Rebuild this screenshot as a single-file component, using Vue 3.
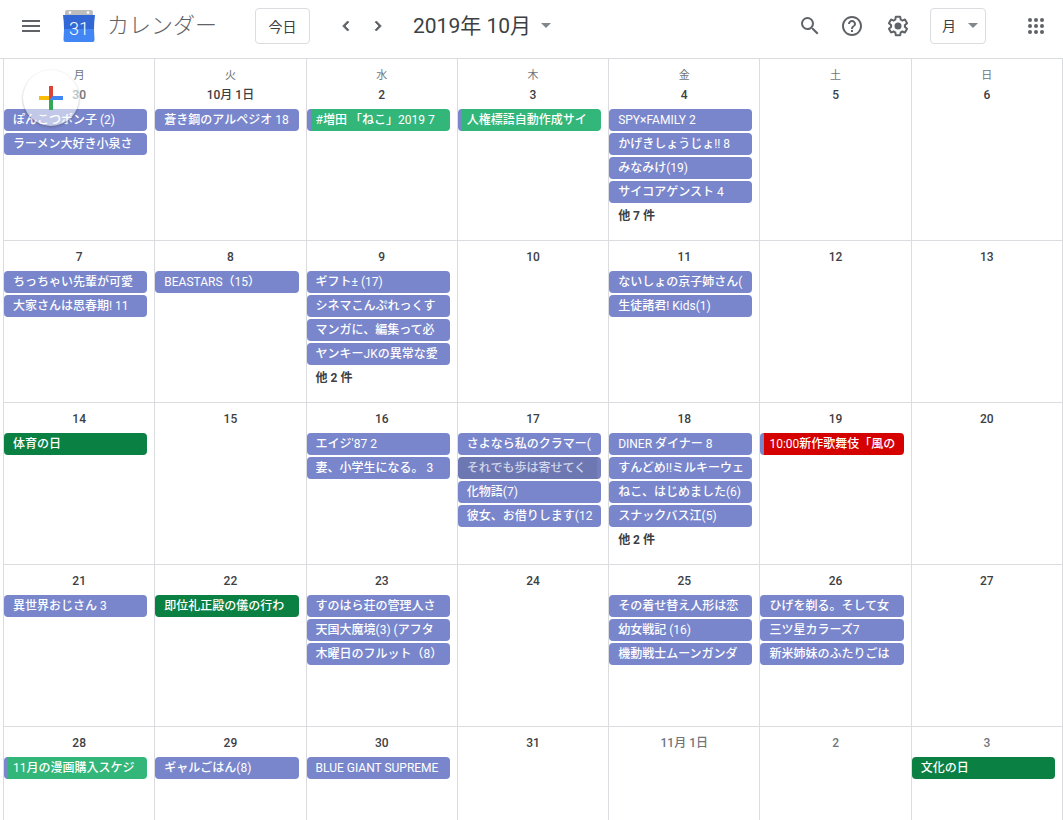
<script setup>
import { ref } from 'vue'

const view = ref('month')
const weekdays = ['月', '火', '水', '木', '金', '土', '日']

// Splits a title into Latin and Japanese runs so each script gets its own weight.
const runs = (title) =>
  (title.match(/[\u3000-\u9fff\uff00-\uffef]+|[^\u3000-\u9fff\uff00-\uffef]+/g) || []).map((text) => ({
    text,
    ja: /[\u3000-\u9fff\uff00-\uffef]/.test(text),
  }))

const e = (title, kind = 'book') => ({ title, kind, runs: runs(title) })
const d = (label, events = [], more = '', outside = false) => ({ label, events, more, outside })

const weeks = [
  [
    d('30', [e('ぽんこつポン子 (2)'), e('ラーメン大好き小泉さ')], '', true),
    d('10月 1日', [e('蒼き鋼のアルペジオ 18')]),
    d('2', [e('#増田 「ねこ」2019 7', 'task')]),
    d('3', [e('人権標語自動作成サイ', 'task')]),
    d('4', [e('SPY×FAMILY 2'), e('かげきしょうじょ!! 8'), e('みなみけ(19)'), e('サイコアゲンスト 4')], '他 7 件'),
    d('5'),
    d('6'),
  ],
  [
    d('7', [e('ちっちゃい先輩が可愛'), e('大家さんは思春期! 11')]),
    d('8', [e('BEASTARS（15）')]),
    d('9', [e('ギフト± (17)'), e('シネマこんぷれっくす'), e('マンガに、編集って必'), e('ヤンキーJKの異常な愛')], '他 2 件'),
    d('10'),
    d('11', [e('ないしょの京子姉さん('), e('生徒諸君! Kids(1)')]),
    d('12'),
    d('13'),
  ],
  [
    d('14', [e('体育の日', 'holiday')]),
    d('15'),
    d('16', [e("エイジ'87 2"), e('妻、小学生になる。 3')]),
    d('17', [e('さよなら私のクラマー('), e('それでも歩は寄せてく', 'faded'), e('化物語(7)'), e('彼女、お借りします(12')]),
    d('18', [e('DINER ダイナー 8'), e('すんどめ!!ミルキーウェ'), e('ねこ、はじめました(6)'), e('スナックバス江(5)')], '他 2 件'),
    d('19', [e('10:00新作歌舞伎「風の', 'stage')]),
    d('20'),
  ],
  [
    d('21', [e('異世界おじさん 3')]),
    d('22', [e('即位礼正殿の儀の行わ', 'holiday')]),
    d('23', [e('すのはら荘の管理人さ'), e('天国大魔境(3) (アフタ'), e('木曜日のフルット（8）')]),
    d('24'),
    d('25', [e('その着せ替え人形は恋'), e('幼女戦記 (16)'), e('機動戦士ムーンガンダ')]),
    d('26', [e('ひげを剃る。そして女'), e('三ツ星カラーズ7'), e('新米姉妹のふたりごは')]),
    d('27'),
  ],
  [
    d('28', [e('11月の漫画購入スケジ', 'task')]),
    d('29', [e('ギャルごはん(8)')]),
    d('30', [e('BLUE GIANT SUPREME')]),
    d('31'),
    d('11月 1日', [], '', true),
    d('2', [], '', true),
    d('3', [e('文化の日', 'holiday')], '', true),
  ],
]
</script>

<template>
  <div class="app">
    <header class="bar">
      <button class="icon menu" aria-label="メインメニュー">
        <svg width="24" height="24" viewBox="0 0 24 24"><path d="M3 18h18v-2H3v2zm0-5h18v-2H3v2zm0-7v2h18V6H3z" /></svg>
      </button>
      <svg class="logo" width="32" height="32" viewBox="0 0 32 32" aria-hidden="true">
        <path fill="#bdbdbd" d="M4 0h24q2 0 2 2v4H2V2q0-2 2-2z" />
        <circle cx="7" cy="2.500" r="1.300" fill="#fff" />
        <circle cx="25" cy="2.500" r="1.300" fill="#fff" />
        <path fill="#3367d6" d="M0 5h32q-1 7-1 14H1Q1 12 0 5z" />
        <path fill="#4285f4" d="M1 19h30l.5 11q0 2-2 2h-27q-2 0-2-2z" />
        <text x="16" y="25" text-anchor="middle" class="logo-num">31</text>
      </svg>
      <h1 class="name">カレンダー</h1>
      <button class="outlined today">今日</button>
      <button class="icon prev" aria-label="前の月">
        <svg width="20" height="20" viewBox="0 0 24 24"><path d="M15.410 7.410L14 6l-6 6 6 6 1.410-1.410L10.830 12z" class="heavy" /></svg>
      </button>
      <button class="icon next" aria-label="次の月">
        <svg width="20" height="20" viewBox="0 0 24 24"><path d="M10 6L8.590 7.410 13.170 12l-4.580 4.590L10 18l6-6z" class="heavy" /></svg>
      </button>
      <button class="period">
        <span>2019年 10月</span>
        <svg width="10" height="5" viewBox="0 0 10 5"><path d="M0 0h10L5 5z" /></svg>
      </button>
      <div class="tools">
        <button class="icon" aria-label="検索">
          <svg width="24" height="24" viewBox="0 0 24 24"><path d="M15.500 14h-.790l-.280-.270A6.471 6.471 0 0 0 16 9.500 6.500 6.500 0 1 0 9.500 16c1.610 0 3.090-.590 4.230-1.570l.270.280v.790l5 4.990L20.490 19l-4.990-5zm-6 0C7.010 14 5 11.990 5 9.500S7.010 5 9.500 5 14 7.010 14 9.500 11.990 14 9.500 14z" /></svg>
        </button>
        <button class="icon" aria-label="ヘルプ">
          <svg width="24" height="24" viewBox="0 0 24 24"><path d="M11 18h2v-2h-2v2zm1-16C6.480 2 2 6.480 2 12s4.480 10 10 10 10-4.480 10-10S17.520 2 12 2zm0 18c-4.410 0-8-3.590-8-8s3.590-8 8-8 8 3.590 8 8-3.590 8-8 8zm0-14c-2.210 0-4 1.790-4 4h2c0-1.100.9-2 2-2s2 .9 2 2c0 2-3 1.750-3 5h2c0-2.250 3-2.500 3-5 0-2.210-1.790-4-4-4z" /></svg>
        </button>
        <button class="icon" aria-label="設定">
          <svg width="24" height="24" viewBox="0 0 24 24">
            <path d="M13.850 22.250h-3.700c-.740 0-1.360-.540-1.450-1.270l-.270-1.890c-.270-.140-.530-.290-.790-.460l-1.800.720c-.700.260-1.470-.030-1.810-.650L2.200 15.530c-.350-.660-.200-1.440.360-1.880l1.530-1.190c-.010-.150-.020-.300-.020-.460 0-.150.010-.310.020-.460l-1.520-1.190c-.590-.450-.740-1.260-.370-1.880l1.850-3.190c.340-.620 1.110-.900 1.790-.630l1.810.730c.260-.170.520-.320.780-.460l.270-1.910c.090-.700.710-1.250 1.440-1.250h3.700c.740 0 1.360.540 1.450 1.270l.270 1.890c.270.140.530.290.790.460l1.800-.720c.710-.260 1.480.030 1.820.650l1.840 3.180c.360.660.200 1.440-.360 1.880l-1.520 1.190c.010.150.020.300.020.460s-.010.310-.020.460l1.520 1.190c.560.450.720 1.230.370 1.860l-1.860 3.220c-.340.620-1.110.900-1.800.630l-1.800-.720c-.260.170-.520.320-.780.460l-.270 1.910c-.100.680-.720 1.220-1.460 1.220zm-3.230-2h2.760l.370-2.550.530-.220c.440-.180.880-.440 1.340-.780l.450-.340 2.380.960 1.380-2.400-2.030-1.580.070-.560c.030-.260.060-.510.060-.780s-.030-.530-.060-.780l-.070-.560 2.030-1.580-1.390-2.400-2.390.960-.450-.350c-.420-.320-.870-.580-1.330-.770l-.520-.220-.370-2.550h-2.760l-.370 2.550-.530.210c-.440.190-.880.440-1.340.790l-.450.330-2.380-.950-1.390 2.390 2.030 1.580-.070.560a7 7 0 0 0-.060.790c0 .260.020.530.060.780l.070.560-2.030 1.580 1.380 2.400 2.390-.960.450.350c.430.330.860.580 1.330.770l.530.220.380 2.550z" />
            <circle cx="12" cy="12" r="3.500" />
          </svg>
        </button>
        <div class="view">
          <select v-model="view" class="outlined view-select" aria-label="表示">
            <option value="month">月</option>
            <option value="week">週</option>
            <option value="day">日</option>
          </select>
          <svg class="view-arrow" width="10" height="5" viewBox="0 0 10 5"><path d="M0 0h10L5 5z" /></svg>
        </div>
        <button class="icon apps" aria-label="アプリ">
          <svg width="24" height="24" viewBox="0 0 24 24">
            <template v-for="y in [6, 12, 18]" :key="y">
              <circle v-for="x in [6, 12, 18]" :key="x" :cx="x" :cy="y" r="2" />
            </template>
          </svg>
        </button>
      </div>
    </header>

    <main class="calendar">
      <button class="create" aria-label="作成">
        <svg width="24" height="24" viewBox="0 0 24 24">
          <path fill="#fbbc05" d="M0 10h12v4H0z" />
          <path fill="#4285f4" d="M12 10h12v4H10z" />
          <path fill="#db4437" d="M10 0h4v10l-4 4z" />
          <path fill="#34a853" d="M10 14h4v10h-4z" />
        </svg>
      </button>
      <div class="month">
        <div v-for="(week, w) in weeks" :key="w" class="week">
          <section v-for="(day, i) in week" :key="i" class="day">
            <div v-if="w === 0" class="weekday">{{ weekdays[i] }}</div>
            <h2 class="date" :class="{ outside: day.outside, first: w === 0 }">{{ day.label }}</h2>
            <button v-for="ev in day.events" :key="ev.title" class="event" :class="ev.kind">
              <span class="title"><span v-for="(run, r) in ev.runs" :key="r" :class="{ ja: run.ja }">{{ run.text }}</span></span>
            </button>
            <button v-if="day.more" class="more">{{ day.more }}</button>
          </section>
        </div>
      </div>
    </main>
  </div>
</template>

<style>
body {
  margin: 0;
  background: #fff;
}
</style>

<style scoped>
.app {
  display: flex;
  flex-direction: column;
  height: 100vh;
  overflow: hidden;
  color: #3c4043;
  font-family: Roboto, "Noto Sans CJK JP", sans-serif;
}
button,
select {
  margin: 0;
  padding: 0;
  border: 0;
  background: none;
  color: inherit;
  font: inherit;
  cursor: pointer;
}
svg {
  display: block;
  flex: none;
  fill: #5f6368;
}
.bar {
  display: flex;
  align-items: center;
  flex: none;
  box-sizing: border-box;
  height: 59px;
  padding: 0 15px 7px 19px;
  border-bottom: 1px solid #dadce0;
}
.icon {
  display: flex;
  align-items: center;
  justify-content: center;
  flex: none;
  width: 24px;
  height: 24px;
}
.heavy {
  stroke: #5f6368;
  stroke-width: 1;
}
.logo {
  margin-left: 20px;
}
.logo-num {
  fill: #fff;
  font-size: 18px;
  font-weight: 300;
}
.name {
  margin: 0 0 0 12px;
  color: #5f6368;
  font-size: 22px;
  font-weight: 300;
  line-height: 32px;
  white-space: nowrap;
}
.outlined {
  box-sizing: border-box;
  height: 36px;
  border: 1px solid #dadce0;
  border-radius: 4px;
  font-size: 14px;
}
.today {
  flex: none;
  width: 55px;
  margin-left: 38px;
}
.prev {
  margin-left: 24px;
}
.next {
  margin-left: 8px;
}
.period {
  display: flex;
  align-items: center;
  gap: 10px;
  margin-left: 23px;
  font-size: 21px;
  line-height: 32px;
  white-space: nowrap;
}
.period svg,
.view-arrow {
  fill: #80868b;
}
.tools {
  display: flex;
  align-items: center;
  gap: 22px;
  margin-left: auto;
}
.tools .icon:first-child {
  margin-right: -4px;
}
.view {
  position: relative;
  margin-left: -2px;
}
.view-select {
  display: block;
  width: 56px;
  padding-left: 11px;
  appearance: none;
}
.view-arrow {
  position: absolute;
  top: 15px;
  right: 8px;
  pointer-events: none;
}
.apps {
  margin-left: 16px;
}
.calendar {
  position: relative;
  flex: 1;
  min-height: 0;
  padding-left: 3px;
  overflow: hidden;
}
.create {
  position: absolute;
  top: 11px;
  left: 23px;
  z-index: 1;
  display: flex;
  align-items: center;
  justify-content: center;
  width: 56px;
  height: 56px;
  border-radius: 50%;
  background: rgba(255, 255, 255, 0.55);
  box-shadow: 0 1px 2px rgba(60, 64, 67, 0.3), 0 1px 3px rgba(60, 64, 67, 0.15);
}
.month {
  border-right: 1px solid #dadce0;
}
.week {
  display: grid;
  grid-template-columns: repeat(7, minmax(0, 1fr));
  min-height: 161px;
  border-bottom: 1px solid #dadce0;
}
.week:first-child {
  min-height: 181px;
}
.day {
  min-width: 0;
  border-left: 1px solid #dadce0;
}
.weekday {
  padding-top: 9px;
  color: #70757a;
  font-size: 11px;
  line-height: 16px;
  text-align: center;
}
.date {
  margin: 0;
  padding: 8px 0 6px;
  font-size: 12px;
  font-weight: 500;
  line-height: 16px;
  text-align: center;
}
.date.first {
  padding-top: 3px;
}
.date.outside {
  color: #70757a;
}
.event {
  display: block;
  box-sizing: border-box;
  width: calc(100% - 7px);
  height: 22px;
  margin-bottom: 2px;
  padding: 0 8px 0 9px;
  border-radius: 4px;
  background: #7986cb;
  color: #fff;
  font-size: 12px;
  line-height: 22px;
  text-align: left;
}
.title {
  display: block;
  overflow: hidden;
  white-space: pre;
}
.ja {
  font-weight: 500;
}
.task,
.stage {
  padding-left: 5px;
  border-left: 4px solid #7986cb;
}
.task {
  background: #33b679;
}
.stage {
  background: #d50000;
}
.holiday {
  background: #0b8043;
}
.faded {
  padding-right: 4px;
  border-right: 4px solid #7580bd;
  background: #6d78b3;
  color: #d2d6ea;
}
.more {
  display: block;
  padding: 0 9px;
  font-size: 12px;
  font-weight: 700;
  line-height: 22px;
}
</style>
